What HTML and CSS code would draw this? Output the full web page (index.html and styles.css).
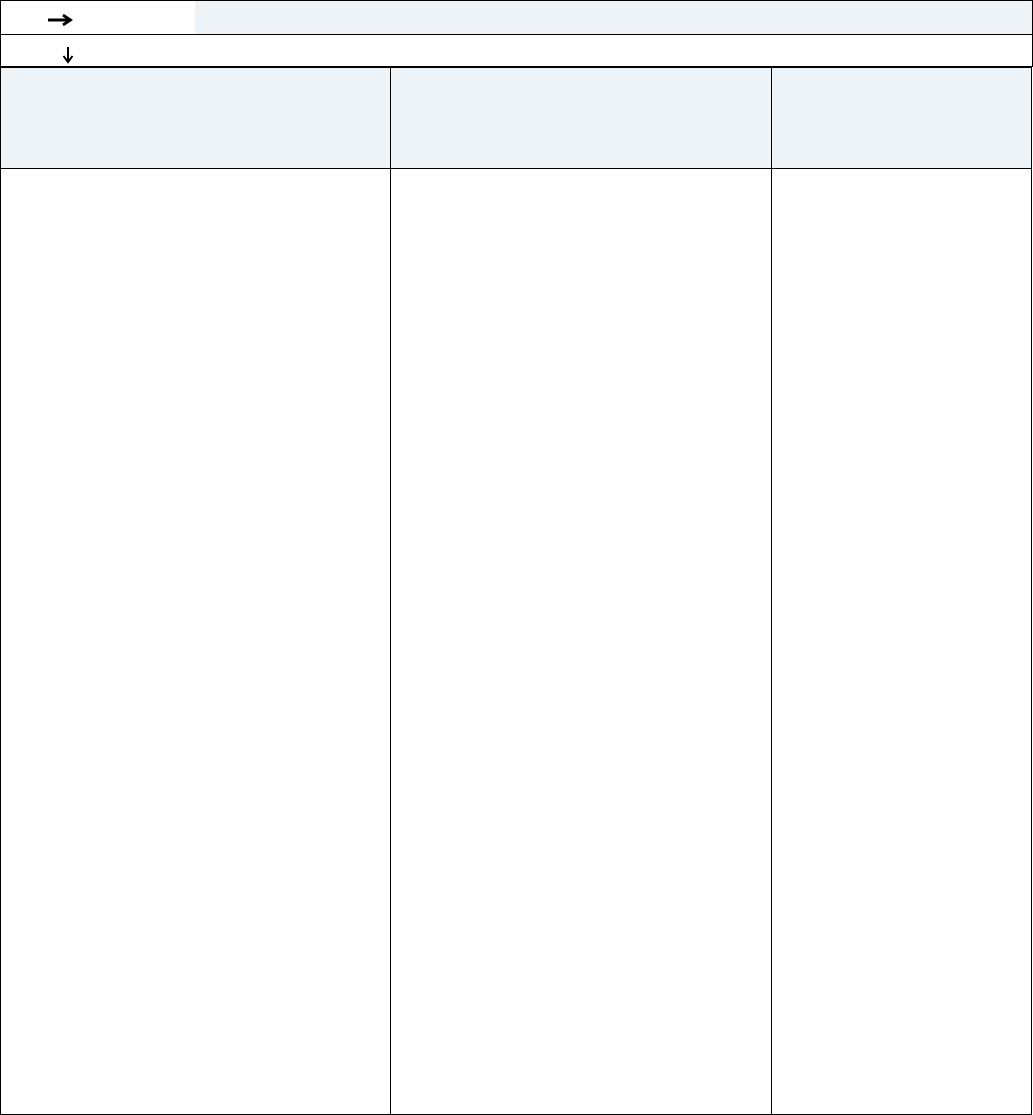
FILE: index.html
```html
<!DOCTYPE html>
<html>
<head>
    <title>Layout</title>
    <link rel="stylesheet" href="styles.css">
</head>
<body>
    <div class="toolbar">
        <div class="toolbar-row">
            <div class="toolbar-cell dir">
                <svg width="26" height="12" viewBox="0 0 26 12">
                    <path d="M1 6 H23.5 M16 1 L23.5 6 L16 11" fill="none" stroke="#000" stroke-width="2.8" stroke-linejoin="miter"/>
                </svg>
            </div>
            <div class="toolbar-cell fill"></div>
        </div>
        <div class="toolbar-row second">
            <div class="toolbar-cell dir-down">
                <svg width="12" height="18" viewBox="0 0 12 18">
                    <path d="M6 1 V16 M1.5 10 L6 16 L10.5 10" fill="none" stroke="#000" stroke-width="2"/>
                </svg>
            </div>
        </div>
    </div>

    <div class="board">
        <div class="board-head">
            <div class="col col-1"></div>
            <div class="col col-2"></div>
            <div class="col col-3"></div>
        </div>
        <div class="board-body">
            <div class="col col-1"></div>
            <div class="col col-2"></div>
            <div class="col col-3"></div>
        </div>
    </div>
</body>
</html>
```

FILE: styles.css
```css
* {
    box-sizing: border-box;
}

body {
    margin: 0;
    font-family: "Liberation Sans", Arial, sans-serif;
    background: #fff;
}

.toolbar {
    width: 1033px;
    border: 1px solid #000;
}

.toolbar-row {
    display: flex;
    height: 34px;
    border-bottom: 1px solid #000;
}

.toolbar-row.second {
    height: 31px;
    border-bottom: none;
}

.toolbar-cell svg {
    display: block;
}

.dir {
    width: 194px;
    padding: 13px 0 0 46px;
    background: #fff;
}

.fill {
    flex: 1;
    background: #eef3f8;
}

.dir-down {
    padding: 11px 0 0 61px;
}

.board {
    width: 1032px;
    border: 1px solid #000;
}

.board-head,
.board-body {
    display: grid;
    grid-template-columns: 389px 381px 260px;
}

.board-head {
    height: 101px;
    border-bottom: 1px solid #000;
    background: #eef3f8;
}

.board-body {
    height: 945px;
    background: #fff;
}

.col-2,
.col-3 {
    border-left: 1px solid #000;
}
```
